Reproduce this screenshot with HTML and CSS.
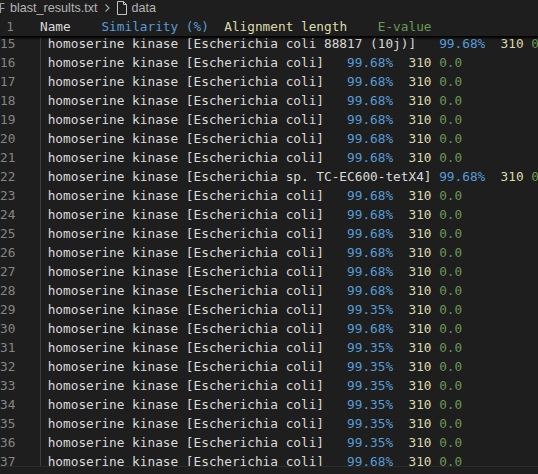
FILE: index.html
```html
<!DOCTYPE html>
<html>
<head>
<meta charset="utf-8">
<link rel="stylesheet" href="styles.css">
</head>
<body>
<div class="breadcrumbs">
  <svg class="cut-icon" width="8" height="16" viewBox="0 0 8 16"><path d="M1.5 3v10M1.5 3.5h4M1.5 8.5h4" fill="none" stroke="#9d9d9d" stroke-width="1.2"/></svg>
  <span class="crumb first">blast_results.txt</span>
  <svg class="chev" width="16" height="16" viewBox="0 0 16 16"><path d="M6.5 4.5l3.5 3.5-3.5 3.5" fill="none" stroke="#a8a8a8" stroke-width="1.1"/></svg>
  <svg class="file" width="14" height="16" viewBox="0 0 14 16"><path d="M2.5 1.5h6l3 3v10h-9z M8.5 1.5v3h3" fill="none" stroke="#c5c5c5" stroke-width="1"/></svg>
  <span class="crumb">data</span>
</div>
<div class="editor">
  <div class="sticky line"><span class="ln">1</span><span class="code">Name	<span class="c2">Similarity (%)</span>	<span class="c3">Alignment length</span>	<span class="c4">E-value</span></span></div>
  <div class="lines">
    <div class="line"><span class="ln">15</span><span class="code guide"> homoserine kinase [Escherichia coli 88817 (10j)]	<span class="c2">99.68%</span>	<span class="c3">310</span>	<span class="c4">0.0</span></span></div>
    <div class="line"><span class="ln">16</span><span class="code guide"> homoserine kinase [Escherichia coli]	<span class="c2">99.68%</span>	<span class="c3">310</span>	<span class="c4">0.0</span></span></div>
    <div class="line"><span class="ln">17</span><span class="code guide"> homoserine kinase [Escherichia coli]	<span class="c2">99.68%</span>	<span class="c3">310</span>	<span class="c4">0.0</span></span></div>
    <div class="line"><span class="ln">18</span><span class="code guide"> homoserine kinase [Escherichia coli]	<span class="c2">99.68%</span>	<span class="c3">310</span>	<span class="c4">0.0</span></span></div>
    <div class="line"><span class="ln">19</span><span class="code guide"> homoserine kinase [Escherichia coli]	<span class="c2">99.68%</span>	<span class="c3">310</span>	<span class="c4">0.0</span></span></div>
    <div class="line"><span class="ln">20</span><span class="code guide"> homoserine kinase [Escherichia coli]	<span class="c2">99.68%</span>	<span class="c3">310</span>	<span class="c4">0.0</span></span></div>
    <div class="line"><span class="ln">21</span><span class="code guide"> homoserine kinase [Escherichia coli]	<span class="c2">99.68%</span>	<span class="c3">310</span>	<span class="c4">0.0</span></span></div>
    <div class="line"><span class="ln">22</span><span class="code guide"> homoserine kinase [Escherichia sp. TC-EC600-tetX4]	<span class="c2">99.68%</span>	<span class="c3">310</span>	<span class="c4">0.0</span></span></div>
    <div class="line"><span class="ln">23</span><span class="code guide"> homoserine kinase [Escherichia coli]	<span class="c2">99.68%</span>	<span class="c3">310</span>	<span class="c4">0.0</span></span></div>
    <div class="line"><span class="ln">24</span><span class="code guide"> homoserine kinase [Escherichia coli]	<span class="c2">99.68%</span>	<span class="c3">310</span>	<span class="c4">0.0</span></span></div>
    <div class="line"><span class="ln">25</span><span class="code guide"> homoserine kinase [Escherichia coli]	<span class="c2">99.68%</span>	<span class="c3">310</span>	<span class="c4">0.0</span></span></div>
    <div class="line"><span class="ln">26</span><span class="code guide"> homoserine kinase [Escherichia coli]	<span class="c2">99.68%</span>	<span class="c3">310</span>	<span class="c4">0.0</span></span></div>
    <div class="line"><span class="ln">27</span><span class="code guide"> homoserine kinase [Escherichia coli]	<span class="c2">99.68%</span>	<span class="c3">310</span>	<span class="c4">0.0</span></span></div>
    <div class="line"><span class="ln">28</span><span class="code guide"> homoserine kinase [Escherichia coli]	<span class="c2">99.68%</span>	<span class="c3">310</span>	<span class="c4">0.0</span></span></div>
    <div class="line"><span class="ln">29</span><span class="code guide"> homoserine kinase [Escherichia coli]	<span class="c2">99.35%</span>	<span class="c3">310</span>	<span class="c4">0.0</span></span></div>
    <div class="line"><span class="ln">30</span><span class="code guide"> homoserine kinase [Escherichia coli]	<span class="c2">99.68%</span>	<span class="c3">310</span>	<span class="c4">0.0</span></span></div>
    <div class="line"><span class="ln">31</span><span class="code guide"> homoserine kinase [Escherichia coli]	<span class="c2">99.35%</span>	<span class="c3">310</span>	<span class="c4">0.0</span></span></div>
    <div class="line"><span class="ln">32</span><span class="code guide"> homoserine kinase [Escherichia coli]	<span class="c2">99.35%</span>	<span class="c3">310</span>	<span class="c4">0.0</span></span></div>
    <div class="line"><span class="ln">33</span><span class="code guide"> homoserine kinase [Escherichia coli]	<span class="c2">99.35%</span>	<span class="c3">310</span>	<span class="c4">0.0</span></span></div>
    <div class="line"><span class="ln">34</span><span class="code guide"> homoserine kinase [Escherichia coli]	<span class="c2">99.35%</span>	<span class="c3">310</span>	<span class="c4">0.0</span></span></div>
    <div class="line"><span class="ln">35</span><span class="code guide"> homoserine kinase [Escherichia coli]	<span class="c2">99.35%</span>	<span class="c3">310</span>	<span class="c4">0.0</span></span></div>
    <div class="line"><span class="ln">36</span><span class="code guide"> homoserine kinase [Escherichia coli]	<span class="c2">99.35%</span>	<span class="c3">310</span>	<span class="c4">0.0</span></span></div>
    <div class="line"><span class="ln">37</span><span class="code guide"> homoserine kinase [Escherichia coli]	<span class="c2">99.68%</span>	<span class="c3">310</span>	<span class="c4">0.0</span></span></div>
  </div>
</div>
<div class="footer"></div>
</body>
</html>
```
FILE: styles.css
```css
html, body {
  margin: 0;
  padding: 0;
  background: #1e1e1e;
  overflow: hidden;
}
body {
  width: 538px;
  height: 474px;
}
.breadcrumbs {
  height: 17px;
  display: flex;
  align-items: center;
  font-family: "Liberation Sans", Arial, sans-serif;
  font-size: 12.6px;
  color: #b4b4b4;
  box-sizing: border-box;
  white-space: nowrap;
  padding-bottom: 1px;
}
.cut-icon {
  margin-left: -1px;
  flex: none;
}
.crumb {
  line-height: normal;
}
.crumb.first {
  margin-left: 3px;
}
.chev {
  margin-left: 1px;
  flex: none;
}
.file {
  margin-right: 3px;
  flex: none;
}
.editor {
  position: relative;
  height: 449px;
  overflow: hidden;
}
.line {
  display: flex;
  height: 19px;
  line-height: 19px;
  font-family: "DejaVu Sans Mono", monospace;
  font-size: 12.75px;
  white-space: pre;
  tab-size: 4;
}
.ln {
  flex: none;
  width: 14px;
  text-align: right;
  color: #858585;
}
.code {
  margin-left: 26px;
  color: #dadada;
}
.guide {
  background: linear-gradient(#404040, #404040) no-repeat 0 0 / 1px 100%;
}
.c2 { color: #569cd6; }
.c3 { color: #dcdcaa; }
.c4 { color: #6a9955; }
.sticky {
  position: absolute;
  top: 0;
  left: 0;
  right: 0;
  z-index: 2;
  background: #1e1e1e;
  box-shadow: 0 2px 2px 0 #000;
}
.lines {
  padding-top: 17px;
}
.footer {
  height: 8px;
  border-top: 1px solid #2b2b2b;
  background: #1e1e1e;
}
```
